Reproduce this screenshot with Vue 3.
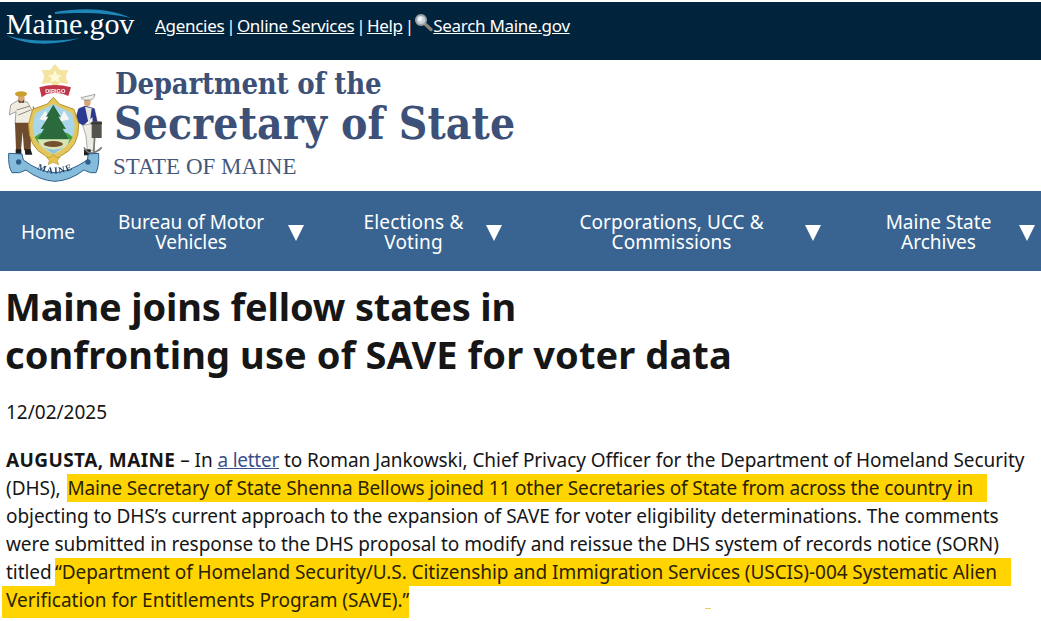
<script setup>
const nav = [
  { label: ['Home'], w: 'home', arrow: false },
  { label: ['Bureau of Motor', 'Vehicles'], w: 'bmv', arrow: true },
  { label: ['Elections &', 'Voting'], w: 'elec', arrow: true },
  { label: ['Corporations, UCC &', 'Commissions'], w: 'corp', arrow: true },
  { label: ['Maine State', 'Archives'], w: 'arch', arrow: true }
]
</script>

<template>
  <div class="page">
    <header class="topbar">
      <div class="logo">
        <svg class="swoosh" width="140" height="58" viewBox="0 0 140 58">
          <path d="M55 10 C85 5 112 7 131 16 C108 11 85 10 55 12 Z" fill="#1f86b8" />
          <path d="M6 33 C20 38 50 41 80 36 C55 44 25 44 6 33 Z" fill="#1f86b8" />
        </svg>
        <span class="logo-text">Maine.gov</span>
      </div>
      <nav class="toplinks">
        <a>Agencies</a><span class="sep">|</span><a>Online Services</a><span class="sep">|</span><a>Help</a><span class="sep">|</span>
        <svg class="glass" width="19" height="19" viewBox="0 0 19 19">
          <path d="M10 10 L17 16.500" stroke="#8c8474" stroke-width="3.400" stroke-linecap="round" />
          <circle cx="7" cy="7" r="5" fill="#c9d3da" stroke="#9aa3a8" stroke-width="2" />
          <circle cx="6" cy="6" r="2.400" fill="#eef2f4" />
        </svg>
        <a>Search Maine.gov</a>
      </nav>
    </header>

    <section class="brand">
      <svg class="seal" width="110" height="125" viewBox="0 0 330 375">
        <!-- star -->
        <path d="M165 12 L180 30 L205 30 L197 50 L205 72 L180 68 L165 80 L150 68 L125 72 L133 50 L125 30 L150 30 Z" fill="#f3e4a0" />
        <path d="M165 30 L171 44 L186 45 L175 55 L179 69 L165 61 L151 69 L155 55 L144 45 L159 44 Z" fill="#fdf8d8" />
        <!-- motto ribbon -->
        <path d="M118 82 Q165 68 213 82 L205 108 L190 102 Q165 96 140 102 L125 112 Z" fill="#c03648" />
        <text x="166" y="98" class="seal-motto" text-anchor="middle">DIRIGO</text>
        <!-- farmer -->
        <path d="M100 140 L114 240" stroke="#8a7a50" stroke-width="4" />
        <path d="M28 165 L32 135 L52 122 L82 126 L104 165 L92 178 L93 192 L45 192 L48 155 Z" fill="#f0ece0" stroke="#77766c" stroke-width="2" />
        <path d="M50 150 L90 138 M55 165 L92 150" stroke="#8d8d80" stroke-width="3" />
        <circle cx="64" cy="114" r="10" fill="#d8a77c" />
        <path d="M55 118 Q64 132 73 118 L72 128 L56 128 Z" fill="#5b3a22" />
        <ellipse cx="63" cy="102" rx="18" ry="8" fill="#c9a030" />
        <path d="M45 188 L94 188 L92 270 L72 270 L68 215 L63 270 L48 270 Z" fill="#6d4b2c" />
        <path d="M47 268 H64 V284 H47 Z M74 268 H92 L97 284 H76 Z" fill="#1f1f1f" />
        <!-- sailor -->
        <path d="M222 192 L236 146 L256 138 L283 146 L293 192 L280 198 L278 170 L250 196 L232 186 Z" fill="#2a3a92" stroke="#1a2460" stroke-width="1.500" />
        <path d="M255 140 L268 200 L275 145 Z" fill="#e7e7df" />
        <path d="M248 196 L280 190 L284 272 L262 272 L258 228 Z" fill="#ecece4" stroke="#888" stroke-width="2" />
        <circle cx="262" cy="128" r="10" fill="#d8a77c" />
        <path d="M243 113 L285 103 L282 112 L275 120 L250 120 Z" fill="#eeeeea" stroke="#555" stroke-width="1.500" />
        <path d="M252 268 H272 V286 H252 Z" fill="#222" />
        <rect x="275" y="184" width="30" height="50" fill="#55534e" />
        <path d="M272 190 H306" stroke="#333" stroke-width="5" />
        <path d="M284 234 L280 285 M252 262 Q270 296 305 262 M305 262 L296 272" stroke="#7c7c78" stroke-width="5" fill="none" />
        <!-- shield -->
        <path d="M160 112 L178 132 L222 148 L236 192 Q238 262 182 288 L160 305 L138 288 Q84 262 86 192 L98 148 L142 132 Z" fill="#e3c75e" stroke="#b59330" stroke-width="3" />
        <path d="M160 132 L216 160 L224 195 Q224 252 160 282 Q96 252 98 195 L106 160 Z" fill="#a9d6ea" />
        <path d="M118 178 L136 152 L152 186 Z M176 186 L192 152 L208 178 Z" fill="#f5f7f5" />
        <path d="M104 232 Q130 205 160 225 Q195 205 218 232 L206 250 L116 250 Z" fill="#3ea03f" />
        <path d="M160 134 L182 170 L175 170 L198 207 L188 206 L206 238 L114 238 L132 206 L122 207 L145 170 L138 170 Z" fill="#2a6a3c" />
        <path d="M112 238 H210 Q200 268 160 282 Q122 268 112 238 Z" fill="#d6e4b6" />
        <path d="M130 262 Q160 276 192 262 L160 282 Z" fill="#8cc3e0" />
        <ellipse cx="160" cy="252" rx="29" ry="9" fill="#735030" />
        <path d="M160 283 L168 292 L180 292 L172 302 L176 314 L160 307 L144 314 L148 302 L140 292 L152 292 Z" fill="#e8c24c" stroke="#a88628" stroke-width="1.500" />
        <!-- state ribbon -->
        <path d="M26 280 Q24 320 36 338 Q60 342 78 330 Q120 362 165 364 Q210 362 252 330 Q272 342 288 338 Q298 318 296 280 L265 282 L262 300 Q210 335 165 338 Q115 335 70 300 L66 282 Z" fill="#86bcdb" stroke="#2e5f8c" stroke-width="3" />
        <circle cx="56" cy="306" r="8" fill="#2e5f8c" />
        <circle cx="264" cy="306" r="8" fill="#2e5f8c" />
        <path id="sealarc" d="M88 313 Q165 368 244 313" fill="none" />
        <text class="seal-state"><textPath href="#sealarc" startOffset="50%" text-anchor="middle">MAINE</textPath></text>
      </svg>
      <div class="brand-text">
        <div class="dept">Department of the</div>
        <div class="sos">Secretary of State</div>
        <div class="som">STATE OF MAINE</div>
      </div>
    </section>

    <nav class="mainnav">
      <div v-for="item in nav" :key="item.w" class="navitem" :class="item.w">
        <div class="navlabel"><span v-for="l in item.label" :key="l">{{ l }}</span></div>
        <span v-if="item.arrow" class="arrow"></span>
      </div>
    </nav>

    <main class="content">
      <h1><span class="h1a">Maine joins fellow states in</span><br /><span class="h1b">confronting use of SAVE for voter data</span></h1>
      <p class="date">12/02/2025</p>
      <p class="body">
        <b>AUGUSTA, MAINE</b> – In <a class="lnk">a letter</a> to Roman Jankowski, Chief Privacy Officer for the Department of Homeland Security<br />
        (DHS), <mark class="m1">Maine Secretary of State Shenna Bellows joined 11 other Secretaries of State from across the country in</mark><br />
        objecting to DHS’s current approach to the expansion of SAVE for voter eligibility determinations. The comments<br />
        were submitted in response to the DHS proposal to modify and reissue the DHS system of records notice (SORN)<br />
        titled <mark class="m2">“Department of Homeland Security/U.S. Citizenship and Immigration Services (USCIS)-004 Systematic Alien</mark><br />
        <mark class="m3">Verification for Entitlements Program (SAVE).”</mark>
      </p>
    </main>
    <i class="speck"></i>
  </div>
</template>

<style>
html, body { margin: 0; background: #fff; overflow: hidden; }
</style>

<style scoped>
.page { width: 1041px; height: 621px; overflow: hidden; position: relative; font-family: "Noto Sans", "Open Sans", sans-serif; color: #161616; }
.topbar { margin-top: 2px; height: 58px; background: #02233c; display: flex; color: #fff; }
.logo { position: relative; width: 148px; flex: none; }
.logo-text { position: absolute; left: 6px; top: 3px; font: 30px/38px "Liberation Serif", serif; color: #fff; letter-spacing: -.1px; }
.swoosh { position: absolute; left: 0; top: 0; }
.toplinks { display: flex; align-items: flex-start; padding: 13px 0 0 7px; font-size: 17px; line-height: 22px; letter-spacing: -.3px; }
.toplinks a { text-decoration: underline; color: #fff; }
.sep { margin: 0 1.500px 0 2px; }
.glass { margin: -2px 0 0 -1px; }
.brand { height: 131px; display: flex; background: #fff; }
.seal { margin: 0; flex: none; filter: blur(.3px); }
.seal-motto { font: bold 17px "Liberation Sans", sans-serif; fill: #fff; }
.seal-state { font: bold 27px "Liberation Serif", serif; fill: #1c3f66; letter-spacing: 4px; }
.brand-text { margin-left: 5px; font-family: "DejaVu Serif Condensed", "DejaVu Serif", serif; color: #3c5078; }
.dept { margin: 6px 0 0 0; font-weight: bold; font-size: 29px; line-height: 36px; letter-spacing: -.2px; }
.sos { font-weight: bold; font-size: 44px; line-height: 50px; margin-top: -3px; margin-left: -1px; letter-spacing: .15px; }
.som { font-family: "Liberation Serif", serif; font-size: 23px; line-height: 28px; margin: 4px 0 0 -2px; color: #46587a; }
.mainnav { margin-top: 0; height: 80px; background: #396491; display: flex; color: #fff; font-size: 19px; line-height: 20px; align-items: center; }
.navitem { display: flex; align-items: center; flex: none; }
.navlabel { display: flex; flex-direction: column; text-align: center; padding-top: 2px; }
.arrow { width: 0; height: 0; border-left: 8.500px solid transparent; border-right: 8.500px solid transparent; border-top: 16px solid #fff; margin-top: 3px; }
.home { margin-left: 21px; }
.bmv { margin-left: 43px; letter-spacing: -.1px; }
.bmv .arrow { margin-left: 23.500px; }
.elec { margin-left: 60px; letter-spacing: .15px; }
.elec .arrow { margin-left: 22px; }
.corp { margin-left: 78px; letter-spacing: .05px; }
.corp .arrow { margin-left: 41px; }
.arch { margin-left: 65px; }
.arch .arrow { margin-left: 27.500px; }
.content { padding: 0 6px; }
h1 { margin: 11px 0 0 -1px; font-size: 38px; line-height: 48px; font-weight: bold; color: #161616; }
.h1a { letter-spacing: -.15px; }
.h1b { letter-spacing: .1px; }
.date { margin: 20px 0 0; font-size: 19px; line-height: 28px; }
.body { margin: 20px 0 0; font-size: 19px; line-height: 28px; white-space: nowrap; letter-spacing: -.06px; }
.body b { letter-spacing: .4px; }
.lnk { color: #3b4f8c; text-decoration: underline; letter-spacing: -.25px; }
mark { background: #ffd400; color: #2a2200; padding: 1px 14px 1px 0; }
.m1 { margin-left: 2px; letter-spacing: -.13px; }
.m2 { margin-left: -1.500px; }
.m3 { margin-left: -4px; padding: 1px 0 5px 4px; letter-spacing: -.02px; }
.speck { position: absolute; left: 705px; top: 608px; width: 6px; height: 1px; background: #e8d060; }
</style>
